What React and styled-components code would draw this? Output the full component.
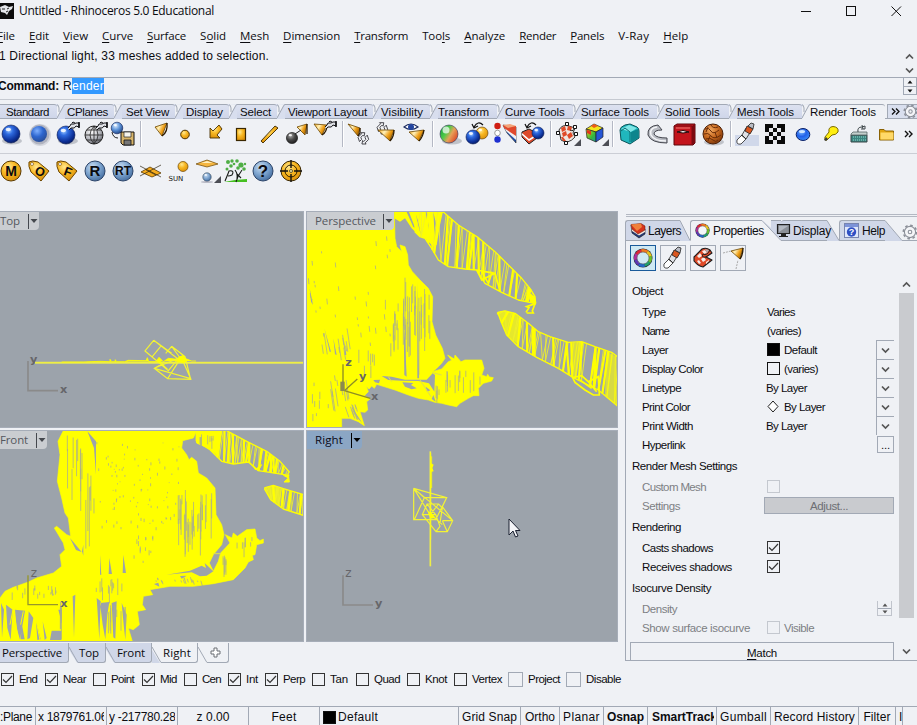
import React from "react";
import styled, { createGlobalStyle } from "styled-components";

const Global = createGlobalStyle`
  html, body { margin: 0; padding: 0; background: #eff1f5; overflow: hidden; }
  * { box-sizing: border-box; }
  svg { display: block; flex: none; }
`;

/* ---------- text ---------- */
const FONTS = {
  ui: '"Open Sans", "Noto Sans", sans-serif',
  sans: '"Liberation Sans", Arial, sans-serif',
};
const pen = document.createElement("canvas").getContext("2d");
const spacingFor = (text, font, width) => {
  pen.font = font;
  return (width - pen.measureText(text).width) / text.length;
};
const Label = styled.span`
  font-family: ${(p) => FONTS[p.$face]};
  font-size: ${(p) => p.$size}px;
  font-weight: ${(p) => (p.$bold ? 700 : 400)};
  letter-spacing: ${(p) => p.$ls.toFixed(3)}px;
  color: ${(p) => p.$color};
  white-space: pre;
  flex: none;
  line-height: 16px;
`;
const Under = styled.span`
  text-decoration: underline;
  text-underline-offset: 2px;
  text-decoration-thickness: 1px;
`;
/* A label whose tracking is adjusted so that it takes `w` pixels; `u` is the mnemonic letter's index. */
const T = ({ children, w, face = "sans", size = 12, bold, color = "#0c0c10", u }) => {
  const ls = spacingFor(children, `${bold ? "bold " : ""}${size}px ${FONTS[face]}`, w);
  return (
    <Label $face={face} $size={size} $bold={bold} $ls={ls} $color={color}>
      {u === undefined ? children : (
        <>{children.slice(0, u)}<Under>{children[u]}</Under>{children.slice(u + 1)}</>
      )}
    </Label>
  );
};

/* ---------- frame ---------- */
const Window = styled.div`
  width: 917px; height: 725px; background: #eff1f5; overflow: hidden;
  display: flex; flex-direction: column; position: relative;
`;
const TitleBar = styled.div`
  height: 22px; display: flex; align-items: center; flex: none;
`;
const TitleText = styled.div`margin-left: 5px; flex: 1; display: flex;`;
const Controls = styled.div`
  display: flex; gap: 34px; align-items: center; padding-right: 15px; height: 20px;
`;
const MenuBar = styled.div`
  height: 27px; display: flex; gap: 14px; align-items: center; flex: none; margin-left: -3px;
`;
const History = styled.div`
  height: 29px; flex: none; border-bottom: 1px solid #a2a9b5; display: flex;
  justify-content: space-between; padding-right: 3px;
`;
const HistoryText = styled.div`margin: -1px 0 0 -1px; display: flex; height: 16px;`;
const Chevrons = styled.div`
  display: flex; flex-direction: column; gap: 7px; padding-top: 4px;
`;
const Command = styled.div`
  height: 22px; flex: none; border-bottom: 1px solid #c6cad1; display: flex; align-items: flex-start;
`;
const CommandText = styled.div`display: flex; margin-left: -2px; gap: 4px; flex: 1;`;
const Entry = styled.div`display: flex;`;
const Selected = styled.span`background: #3399ff; height: 16px; display: flex; margin-left: 1px;`;
const Spinner = styled.div`
  width: 14px; height: 17px; border: 1px solid #a2a9b5; border-top: 0; margin-right: 0;
  display: grid; grid-template-rows: 1fr 1fr; align-items: center; justify-items: center;
`;
const SpinHalf = styled.div`
  width: 100%; height: 100%; display: grid; place-items: center;
  & + & { border-top: 1px solid #a2a9b5; }
`;
const SmallSpin = styled(Spinner)`height: 15px; width: 15px; border-color: #c0c4cc; margin-right: 2px;`;

/* ---------- toolbar tabs ---------- */
const TabStrip = styled.div`
  height: 19px; flex: none; display: flex; align-items: flex-end;
  border-bottom: 1px solid #a2a9b5;
`;
const TabBox = styled.div`
  width: ${(p) => p.$w}px; flex: none; display: flex;
  background: ${(p) => (p.$active ? "#eff1f5" : "linear-gradient(#dde2f0, #cfd6ea)")};
  margin-bottom: ${(p) => (p.$active ? "-1px" : 0)};
  height: ${(p) => (p.$active ? 15 : 14)}px;
`;
const TabFace = styled.div`
  flex: 1; border-top: 1px solid #a2a9b5; display: flex; align-items: center; min-width: 0;
  padding-left: ${(p) => p.$pad}px;
  border-radius: 0 3px 0 0;
`;
const Slant = ({ active }) => (
  <svg width="8" height="15" viewBox="0 0 8 15">
    <path d="M0 15 0 0 8 0 8 15Z" fill="#d3d9ea" />
    <path d="M-1 0H0Q2 0 0 3V13L7 .5H8" fill="#eff1f5" />
    <path d="M0 15 1 12 6 3Q7 .5 8 .5V15Z" fill={active ? "#eff1f5" : "#d8deee"} />
    <path d="M-1 .5Q2 .5 2 4V8M0 14 6 3Q7 .5 8 .5" fill="none" stroke="#a2a9b5" />
  </svg>
);
const StripEnd = styled.div`
  flex: 1; display: flex; align-items: center; height: 14px; border-left: 1px solid #a2a9b5;
  border-top: 1px solid #a2a9b5; padding-left: 3px; gap: 3px; margin-left: 2px; background: #d9dfee;
`;
const TOP_TABS = [
  ["Standard", 57, 43, 6, 1], ["CPlanes", 57, 41, 2], ["Set View", 61, 43, 4], ["Display", 54, 37, 3],
  ["Select", 48, 31, 3], ["Viewport Layout", 96, 79, 3], ["Visibility", 57, 42, 0], ["Transform", 67, 51, 0],
  ["Curve Tools", 76, 60, 0], ["Surface Tools", 84, 68, 0], ["Solid Tools", 72, 55, 0],
  ["Mesh Tools", 73, 57, 0], ["Render Tools", 83, 66, 0, 0, 1],
];

/* ---------- toolbars ---------- */
const ToolRow = styled.div`
  height: ${(p) => p.$h}px; flex: none; display: flex; padding-top: ${(p) => p.$top}px;
  border-bottom: ${(p) => (p.$line ? "1px solid #cbced5" : "0")};
  & > svg:first-child { margin-left: -3px; }
`;
const Divider = styled.div`
  width: 2px; height: 26px; margin: 1px 1px 0 3px; flex: none;
  background: linear-gradient(90deg, #b4b8c4 50%, #fff 50%);
`;
const More = styled.div`width: 16px; padding-top: 5px; flex: none;`;

const Slot = ({ children }) => <svg width="28" height="28" viewBox="0 0 28 28">{children}</svg>;
const Ball = ({ x = 14, y = 14, r = 9, fill = "blue", edge = "#0b1d55" }) => (
  <>
    <circle cx={x} cy={y} r={r} fill={`url(#${fill})`} stroke={edge} strokeWidth=".6" />
    <ellipse cx={x - r * 0.3} cy={y - r * 0.5} rx={r * 0.3} ry={r * 0.2} fill="#fff" opacity=".85" />
  </>
);
const Shade = ({ x = 15, y = 21, r = 10 }) => <ellipse cx={x} cy={y} rx={r} ry="3.5" fill="#5d6270" opacity=".32" />;
const Pot = ({ x = 0, y = 0 }) => (
  <g transform={`translate(${x} ${y})`} fill="none" stroke="#16161a" strokeWidth="1">
    <path d="M1 7 3 5Q3 2 7 3L9 2H12V6L9 5Q8 8 4 7L2 9M5 2 6 1 8 2" fill="#dfe1e6" />
    <path d="M12 1V7" strokeWidth="1.6" />
  </g>
);
const Cone = ({ p, tip }) => (
  <>
    <path d={p} fill="url(#cone)" stroke="#6b4600" strokeWidth=".8" strokeLinejoin="round" />
    <path d={tip} stroke="#2c1a00" strokeWidth="1.3" fill="none" />
  </>
);
const Links = ({ x, y }) => (
  <g transform={`translate(${x} ${y}) rotate(-45)`} fill="#f4f5f8" stroke="#3e3e44" strokeWidth=".9">
    <path d="M-5 0 -3-4 2-4 2-5.500 5-2.500 2-.5 2-2H-1L-2 0Z" />
    <path d="M5 1 3 5H-2V6.500L-5 3.500-2 1.500V3H1L2 1Z" />
  </g>
);
const Corner = () => <path d="M28 19V26H21Z" fill="#4c4e55" />;
const Wedge = ({ x = 0, y = 0 }) => (
  <g transform={`translate(${x} ${y})`} strokeWidth=".6">
    <path d="M0 1 13 3V19L4 9Z" fill="#1c4fb0" stroke="#222" />
    <path d="M1 2 13 3V16L3 7Z" fill="#f2f0f2" />
    <path d="M0 1 13 2V12L1 4Z" fill="#e0482c" />
    <path d="M0 1 7 0 13 2 5 4Z" fill="#f3a47a" />
  </g>
);
const Flip = ({ x = 0, y = 0 }) => (
  <path transform={`translate(${x} ${y})`} d="M0 5Q4-2 9 3M-2 2 0 6 4 4" fill="none" stroke="#111" strokeWidth="1.2" />
);
const Tube = () => (
  <g stroke="#222" strokeWidth=".8" strokeLinejoin="round">
    <path d="M4 20 9 15 13 19 8 24Q3 25 4 20Z" fill="#fff" />
    <path d="M9 15 13 8 18 11 13 19Z" fill="#dfe1e6" />
    <path d="M12 11 14 6 20 9 17 14Z" fill="#d9561f" />
    <path d="M15 6 18 3 21 4 20 9Z" fill="#b9bcc4" />
    <path d="M8 15 13 19" />
  </g>
);
const CheckBall = () => (
  <>
    <path d="M6 10Q9 4 16 6L22 8 20 13 22 17Q15 25 8 20Z" fill="#efe7e2" stroke="#222" strokeWidth=".9" />
    <path d="M8 8 12 6 13 10 9 12ZM15 6 19 7 18 11 14 10ZM9 13 13 11 14 15 10 17ZM14 15 18 12 20 16 16 19ZM8 17 10 17 13 21 10 21Z" fill="#df4a28" />
    <path d="M17 10Q21 12 21 8" fill="none" stroke="#222" />
  </>
);
const Roll = () => (
  <>
    <path d="M4 13 12 5Q16 3 20 6L22 9 16 13 22 16 13 23Q8 22 4 17Z" fill="#e04a28" stroke="#1c1c1c" strokeWidth="1.1" strokeLinejoin="round" />
    <path d="M7 12 10 9 12 12 9 14ZM12 7 15 6 17 9 14 10ZM11 15 14 13 16 16 13 18ZM7 17 9 16 11 19 9 20ZM16 18 19 16 19 17 16 20Z" fill="#f5ece8" />
    <path d="M16 13Q11 14 13 10 17 12 20 6" fill="none" stroke="#1c1c1c" />
    <path d="M15 5 19 6 17 9Z" fill="#aeb1b8" />
  </>
);

const ROW1 = [
  [
    <><Shade /><Ball /></>,
    <g key="b"><circle cx="15" cy="15" r="11" fill="#5b6172" opacity=".18" /><circle cx="14.5" cy="14.5" r="10" fill="#6d7386" opacity=".35" /><circle cx="14" cy="14" r="8" fill="url(#soft)" /></g>,
    <><Shade /><Ball x={13} y={15} /><Pot x={14} y={1} /></>,
    <g key="g"><circle cx="13" cy="15" r="9" fill="url(#grey)" stroke="#222" /><path d="M4 15H22M13 6V24M6 10H20M6 20H20M13 6Q5 15 13 24M13 6Q21 15 13 24" fill="none" stroke="#222" strokeWidth=".8" /><Pot x={14} y={1} /></g>,
    <g key="d"><Ball x={8} y={8} r={5.8} fill="sky" /><path d="M12 12H25V25H14L12 23Z" fill="#d8b56a" stroke="#111" /><path d="M15 12H22V17H15Z" fill="#f6f4ec" stroke="#222" strokeWidth=".7" /><path d="M15 20H22V25H15Z" fill="#777" stroke="#111" strokeWidth=".8" /><path d="M3 12Q4 18 9 18" fill="none" stroke="#222" /></g>,
  ],
  [
    <Cone p="M12 7 24 3 19 16Z" tip="M24 3Q25 12 19 16" />,
    <circle cx="14" cy="14.5" r="4.3" fill="url(#gold)" stroke="#4a3100" />,
    <path d="M11 8V18H21L18 15 23 9 20 5 14 11Z" fill="url(#gold)" stroke="#4a3100" strokeWidth=".9" />,
    <rect x="9.5" y="8.500" width="9" height="12" fill="url(#gold)" stroke="#3a2700" strokeWidth="1.2" />,
    <path d="M6 21 20 6 23 8 8 23Z" fill="url(#gold)" stroke="#3a2700" strokeWidth=".9" />,
    <><Cone p="M14 7 24 4 22 15Z" tip="M24 4V14" /><Ball x={9} y={18} r={5.6} fill="dark" edge="#111" /><path d="M12 14 18 10" stroke="#222" /></>,
    <><Cone p="M3 4 16 5 11 15Z" tip="M16 5Q16 12 11 15" /><Pot x={13} y={0} /></>,
  ],
  [
    <><Cone p="M3 4 15 8 13 16Z" tip="M15 8V13L13 16" /><Links x={18} y={18} /></>,
    <><Links x={9} y={8} /><Cone p="M5 10 21 10 17 21Z" tip="M21 10Q21 17 17 21" /></>,
    <g key="e"><path d="M3 7Q10 1 17 7Q10 12 3 7Z" fill="#fff" stroke="#1c2c60" strokeWidth="1.2" /><circle cx="10" cy="7" r="3" fill="#2345a0" /><Cone p="M8 12 23 10 18 21Z" tip="M23 10Q22 17 18 21" /></g>,
  ],
  [
    <><Shade x={17} /><circle cx="14" cy="14" r="9" fill="url(#rgb)" stroke="#335" strokeWidth=".6" /><circle cx="11" cy="10" r="3.500" fill="#fff" opacity=".7" /></>,
    <><Ball x={19} y={13} r={6} fill="gold" edge="#553600" /><Ball x={10} y={17} r={7} /><Flip x={11} y={2} /></>,
    <><Wedge x={12} y={4} /><circle cx="6.500" cy="6" r="3.200" fill="#cf1d12" /><circle cx="6.500" cy="13" r="2.800" fill="#fff" stroke="#777" strokeWidth=".7" /><circle cx="6.500" cy="19.500" r="3.200" fill="#1d2fd0" /></>,
    <><path d="M3 12 10 9 18 13V18L10 24 3 17Z" fill="#dd4a2c" stroke="#222" /><path d="M3 13 10 19 18 14V16L10 21 3 15Z" fill="#fff" /><Ball x={19} y={13} r={6} /><Flip x={8} y={2} /></>,
  ],
  [
    <><CheckBall /><g fill="#fff" stroke="#111"><path d="M12.500 2.500h3v3h-3zM3.500 11.500h3v3h-3zM21.500 12.500h3v3h-3zM20.500 5.500h3v3h-3zM11.500 21.500h3v3h-3z" /></g><Corner /></>,
    <><path d="M5 9 13 4 22 8 15 12Z" fill="#f2e61c" stroke="#222" strokeWidth=".7" /><path d="M5 9 15 12V22L6 18Z" fill="url(#cubeL)" stroke="#222" strokeWidth=".7" /><path d="M15 12 22 8V17L15 22Z" fill="#2656d6" stroke="#222" strokeWidth=".7" /><path d="M10 6 13 4 17 6 13 8Z" fill="#ee5a1a" /><path d="M6 10 10 11 10 15 6 13Z" fill="#e4361a" /><Corner /></>,
  ],
  [
    <><path d="M5 10Q5 7 10 5L15 4 22 7Q24 8 24 11V18L15 24 6 20Z" fill="#20b7bd" stroke="#0a5258" /><path d="M6 9 14 5 22 8 16 12Z" fill="#7fe6e6" /><path d="M16 12 23 9V18L16 23Z" fill="#0d858d" /><path d="M6 11 10 8 15 12V22" stroke="#0a6e74" fill="none" /></>,
    <><path d="M15 5Q4 6 5 15 8 23 24 23V18Q13 18 11 14 11 10 19 10Z" fill="#b9bcc3" stroke="#44464e" /><path d="M14 7Q6 8 8 15 11 21 23 21" fill="none" stroke="#f4f5f8" strokeWidth="1.600" /></>,
    <><path d="M3 6 6 4H24V23L22 25H3Z" fill="#c3141c" stroke="#5c060a" /><path d="M3 6H21V25" fill="none" stroke="#7b0a10" /><path d="M21 6 24 4V23L21 25Z" fill="#7b0a10" /><path d="M6 12Q12 9 18 12Q12 14 6 12Z" fill="#fff" stroke="#220406" /><path d="M5 8H19" stroke="#ef7a72" /></>,
    <><Shade x={15} y={22} /><circle cx="14" cy="14" r="10" fill="url(#bark)" stroke="#4a1f06" /><path d="M6 9Q10 7 12 11T20 10M5 14Q9 12 12 16T22 15M7 19Q11 17 14 20T19 20M12 5Q14 9 19 7M9 7 7 12M16 12 18 18M11 16 9 21" fill="none" stroke="#6b2d08" strokeWidth="1" /></>,
  ],
  [
    <><rect x="2" y="15" width="24" height="11" fill="#d0d8ea" /><Tube /></>,
    <><rect x="4" y="4" width="20" height="20" fill="#0a0a0a" /><path d="M8 8h4v4h-4zM16 8h4v4h-4zM12 12h4v4h-4zM4 12h4v4h-4zM20 12h4v4h-4zM8 16h4v4h-4zM16 16h4v4h-4zM12 4h4v4h-4zM12 20h4v4h-4z" fill="#e8e9ee" /></>,
    <><ellipse cx="14" cy="14.500" rx="6.800" ry="6" fill="url(#sky2)" stroke="#0a2068" /><ellipse cx="13" cy="11.500" rx="3" ry="1.500" fill="#cfe6ff" /></>,
    <><path d="M12 12Q11 7 16 6.500 22 7 21 12 19 15 15 15L10 20Q7 21 8 17Z" fill="#ffee10" stroke="#7b6a00" /><path d="M9 17 11 19 9 21 7 20Z" fill="#3c3c3c" /></>,
    <><path d="M6 15H22V22H6Z" fill="#3b8580" stroke="#3a4648" /><path d="M6 14 8 12H22V15H6Z" fill="#c4cfcd" stroke="#566" strokeWidth=".8" /><path d="M8 17H21M8 20H21" stroke="#95d8cd" strokeDasharray="1 1" /><path d="M13 12Q12 7 17 7L20 6V9L16 9M17 5 18 9" fill="none" stroke="#3e474a" /></>,
    <><path d="M6.500 9.500H11L12.500 11H20.500V20H6.500Z" fill="#e0a410" stroke="#8a6204" /><path d="M7.500 12.500H20.500V19.500H7.500Z" fill="#ffd968" /></>,
  ],
];

const Coin = ({ fill, edge, text, size = 14 }) => (
  <>
    <circle cx="14" cy="14" r="10" fill={`url(#${fill})`} stroke={edge} />
    <text x="14" y={14 + size * 0.36} textAnchor="middle" fontFamily="Liberation Sans" fontWeight="700" fontSize={size} fill="#0a0a0e">{text}</text>
  </>
);
const Tag = ({ text }) => (
  <>
    <path d="M4 5Q7 3 13 5L24 14 16 24 6 15Q3 9 4 5Z" fill="url(#gold)" stroke="#6b4500" />
    <circle cx="7" cy="7" r="1.500" fill="#fff" stroke="#6b4500" strokeWidth=".6" />
    <text x="15" y="19" transform="rotate(20 15 15)" textAnchor="middle" fontFamily="Liberation Sans" fontWeight="700" fontSize="12.500" fill="#0a0a0e">{text}</text>
  </>
);
const ROW2 = [
  <Coin fill="gold" edge="#5a3a00" text="M" />,
  <Tag text="O" />,
  <Tag text="F" />,
  <Coin fill="steel" edge="#2c4468" text="R" size={15} />,
  <Coin fill="steel" edge="#2c4468" text="RT" size={12} />,
  <><path d="M4 15 13 10 24 16 15 20Z" fill="#f5ab1c" stroke="#5a3a00" strokeWidth=".8" /><path d="M3 9 24 20M3 19 24 8M9 13 19 18" stroke="#2c2410" strokeWidth=".7" /></>,
  <><circle cx="18" cy="9.500" r="5" fill="url(#gold)" stroke="#6b4500" strokeWidth=".7" /><text x="3.500" y="24" fontFamily="DejaVu Sans" fontSize="7" fill="#111">SUN</text></>,
  <><path d="M3 7 14 3 25 7 14 10Z" fill="#f5b641" stroke="#6b4500" strokeWidth=".7" /><path d="M8 6 14 4 20 6Z" fill="#fff0c0" /><Ball x={14} y={20} r={4.200} fill="steel" edge="#345" /><ellipse cx="14" cy="25" rx="6" ry="1" fill="#889" opacity=".5" /><Corner /></>,
  <><path d="M3 25H26V22L14 23Z" fill="#45c021" /><g fill="#4fae45"><circle cx="7" cy="5" r="2" /><circle cx="11" cy="4" r="1.700" /><circle cx="16" cy="4" r="1.800" /><circle cx="20" cy="8" r="2.600" /><circle cx="17" cy="11" r="1.800" /><circle cx="10" cy="9" r="1.800" /><circle cx="23" cy="12" r="1.800" /><circle cx="6" cy="12" r="1.500" /><circle cx="13" cy="7" r="1.300" /><circle cx="24" cy="7" r="1.200" /></g><path d="M4 24Q7 17 8 14 14 13 11 18 9 19 7 19M14 13Q17 17 16 22M21 13Q17 18 15 25M16 17 20 21" fill="none" stroke="#161a16" strokeWidth="1.100" /></>,
  <Coin fill="steel" edge="#2c4468" text="?" size={17} />,
  <><circle cx="14" cy="14" r="10" fill="url(#gold)" stroke="#3a2700" /><circle cx="14" cy="14" r="6" fill="none" stroke="#2a1c00" /><path d="M3 14H11M17 14H25M14 3V11M14 17V25" stroke="#111" strokeWidth="1.400" /><circle cx="14" cy="14" r="1.500" fill="#fff3a0" stroke="#222" strokeWidth=".7" /></>,
];

const grad = (id, stops, at = {}) => (
  <radialGradient id={id} key={id} cx=".38" cy=".3" r=".75" {...at}>
    {stops.map(([o, c]) => <stop key={o} offset={o} stopColor={c} />)}
  </radialGradient>
);
const HiddenDefs = styled.svg`position: absolute; width: 0; height: 0;`;
const Paints = () => (
  <HiddenDefs>
    <defs>
      {grad("blue", [[0, "#9cc8ff"], [0.3, "#2f6be0"], [0.75, "#0c2f96"], [1, "#071c60"]])}
      {grad("soft", [[0, "#7fb0ff"], [0.5, "#2d66cf"], [1, "#2a4d94"]])}
      {grad("sky", [[0, "#dcedff"], [0.5, "#5d93d8"], [1, "#1c4080"]])}
      {grad("sky2", [[0, "#7ab8ff"], [0.5, "#2060e8"], [1, "#3c90f8"]])}
      {grad("steel", [[0, "#c9ddf2"], [0.5, "#7fa6d0"], [1, "#426b9e"]])}
      {grad("grey", [[0, "#ffffff"], [0.6, "#b5b7bd"], [1, "#606269"]])}
      {grad("dark", [[0, "#a8a8a8"], [0.5, "#474747"], [1, "#1c1c1c"]])}
      {grad("gold", [[0, "#ffe890"], [0.45, "#f8b823"], [1, "#d98e08"]])}
      {grad("bark", [[0, "#f0a860"], [0.5, "#c96a20"], [1, "#7a3408"]])}
      <linearGradient id="cone" x1="0" y1="0" x2="1" y2=".5"><stop offset="0" stopColor="#ffb020" /><stop offset=".4" stopColor="#fff0b8" /><stop offset=".7" stopColor="#f0a018" /><stop offset="1" stopColor="#a86400" /></linearGradient>
      <linearGradient id="rgb" x1="0" y1=".2" x2="1" y2=".8"><stop offset="0" stopColor="#18a040" /><stop offset=".35" stopColor="#4ecb48" /><stop offset=".6" stopColor="#e8a058" /><stop offset="1" stopColor="#d83a20" /></linearGradient>
      <linearGradient id="cubeL" x1="0" y1="0" x2="1" y2="1"><stop offset="0" stopColor="#f2d21c" /><stop offset=".6" stopColor="#38b83a" /><stop offset="1" stopColor="#1a9aa0" /></linearGradient>
    </defs>
  </HiddenDefs>
);

/* ---------- viewports ---------- */
const Y = "#ffff00";
const G = "#9ca3ab";
const random = (seed) => () => {
  seed = (seed * 16807) % 2147483647;
  return seed / 2147483647;
};
const along = (pts, x) => {
  for (let i = 1; i < pts.length; i++) {
    const [x0, y0] = pts[i - 1];
    const [x1, y1] = pts[i];
    if (x <= x1) return y0 + ((y1 - y0) * (x - x0)) / (x1 - x0 || 1);
  }
  return pts[pts.length - 1][1];
};
const line = (pts) => "M" + pts.map((p) => p.join(" ")).join("L");
/* Triangulated strip between an upper and a lower outline. */
const Strip = ({ top, bot, step = 9, seed = 7, lean = 6 }) => {
  const r = random(seed);
  const x0 = Math.max(top[0][0], bot[0][0]);
  const x1 = Math.min(top[top.length - 1][0], bot[bot.length - 1][0]);
  const inside = (x) => Math.min(x1, Math.max(x0, x));
  let thin = "";
  let thick = "";
  for (let x = x0; x < x1; x += step * (0.5 + r() * 1.2)) {
    const a = inside(x + (r() - 0.3) * lean * 2);
    const b = inside(x + (r() - 0.7) * lean);
    const seg = `M${a} ${along(top, a)}L${b} ${along(bot, b)}`;
    if (r() > 0.5) thick += seg; else thin += seg;
    const c = inside(b + step * 1.3);
    thin += `M${c} ${along(top, c)}L${b} ${along(bot, b)}`;
  }
  return (
    <g fill="none" stroke={Y} strokeLinejoin="round">
      <path d={line(top) + line(bot)} strokeWidth="4" />
      <path d={thin} strokeWidth="2.600" stroke="#f0f028" />
      <path d={thick} strokeWidth="6.500" />
    </g>
  );
};
/* Thin gaps between mesh faces. */
const Gaps = ({ areas, seed = 3 }) => {
  const r = random(seed);
  let d = "";
  areas.forEach(([x, y, w, h, n, len, lean = 0]) => {
    for (let i = 0; i < n; i++) {
      const px = x + r() * w;
      const py = y + r() * h;
      const l = len * (0.3 + r());
      d += `M${px.toFixed(1)} ${py.toFixed(1)}l${lean * l} ${l}`;
    }
  });
  return <path d={d} fill="none" stroke="#a9ad90" strokeWidth="2.300" />;
};
const ViewGrid = styled.div`
  width: 618px; height: 431px; flex: none; display: grid;
  grid-template-columns: 304px 312px; grid-template-rows: 217px 212px; gap: 2px;
`;
const View = styled.div`
  background: ${G}; border: 1px solid #a6adb8; border-left-width: ${(p) => (p.$edge ? 0 : 1)}px;
  position: relative; overflow: hidden;
`;
const ViewTag = styled.div`
  position: absolute; left: 0; top: 0; height: 18px; width: ${(p) => p.$w}px;
  display: flex; align-items: center; padding-left: ${(p) => p.$pad}px;
  background: ${(p) => (p.$active ? "#8ba6c4" : "#cacdd1")}; border-radius: 0 0 4px 0;
`;
const TagRule = styled.i`
  width: 1px; height: 15px; background: ${(p) => p.$c}; margin-left: auto;
`;
const Arrow = ({ c }) => <svg width="10" height="10" viewBox="0 0 10 10"><path d="M1.500 3H8.500L5 7Z" fill={c} /></svg>;
const Caption = ({ name, w, tw, pad, active }) => (
  <ViewTag $w={w} $pad={pad} $active={active}>
    <T w={tw} face="ui" size={11.5} color={active ? "#0a0a18" : "#55585e"}>{name}</T>
    <TagRule $c={active ? "#000" : "#45484e"} />
    <Arrow c={active ? "#000" : "#45484e"} />
  </ViewTag>
);
const AxisText = ({ x, y, children, light }) => (
  <text x={x} y={y} fontFamily="DejaVu Sans" fontWeight={light ? 400 : 700} fontSize={light ? 36 : 34} fill="#66666a">{children}</text>
);
const Cursor = styled.svg`position: absolute; left: 201px; top: 87px;`;

const persTop = [[330, 12], [415, 21], [460, 60], [520, 98], [570, 140], [610, 180], [650, 220], [675, 250], [690, 275], [692, 296]];
const persTopLow = [[330, 80], [345, 95], [360, 100], [380, 130], [400, 165], [430, 185], [480, 192], [515, 195], [540, 235], [590, 262], [640, 285], [692, 296]];
const persBot = [[578, 322], [600, 318], [630, 325], [670, 355], [700, 380], [735, 395], [790, 412], [830, 410], [870, 425], [920, 442], [940, 457]];
const persBotLow = [[578, 322], [590, 355], [605, 390], [640, 425], [695, 457], [760, 490], [805, 518], [880, 555], [940, 605]];
const frontTop = [[590, 5], [680, 8], [740, 40], [800, 70], [840, 100], [868, 132]];
const frontTopLow = [[590, 40], [630, 65], [665, 100], [700, 108], [745, 102], [775, 128], [868, 142]];
const frontBot = [[793, 180], [820, 172], [850, 182], [910, 200]];
const frontBotLow = [[793, 182], [812, 215], [850, 243], [910, 262]];

/* Drawing units in the viewports are thirds of a pixel. */
const TopView = () => (
  <View $edge>
    <svg width="303" height="215" viewBox="0 21 909 645">
      <path d="M84 468V557H174" fill="none" stroke="#8a8a8a" strokeWidth="5" />
      <AxisText x="90" y="474">y</AxisText><AxisText x="180" y="564">x</AxisText>
      <path d="M105 473.500H909" stroke="#e6e65c" strokeWidth="6" />
      <path d="M105 473H909" stroke="#f4f430" strokeWidth="2" />
      <path d="M185 471H250L300 469 330 470V463L335 470H345L346 464L349 470H374L385 466 438 467 442 458 446 470H468L477 457 490 470 505 460 530 463 545 455 560 462 575 468H588" fill={Y} stroke={Y} strokeWidth="2.500" />
      <g fill="none" stroke="#f4f430" strokeWidth="3.500">
        <path d="M461 406 435 438 505 497 530 467M461 406 545 470M461 406 515 445M484 422 455 457M435 438 478 474M515 424 497 445M515 424 555 455 572 523 503 521 463 490 545 455 503 521M463 490 572 521 545 460M515 424 545 465M478 470 503 493M490 475 463 490" />
      </g>
      <path d="M530 470 536 455 550 450 562 468 550 475ZM470 470 478 458 485 476Z" fill={Y} />
    </svg>
    <Caption name="Top" w={39} tw={20} pad={0} />
  </View>
);
const PerspectiveView = () => (
  <View>
    <svg width="310" height="215" viewBox="6 21 930 645">
      <path d="M6 21H268L270 100 275 125 290 140 285 120 300 125 308 150 310 180 322 200 345 225 370 250 383 275 381 350 392 390 412 430 420 460 410 475 395 490 383 500 410 492 430 470 440 466 428 450 448 462 450 450 468 470 480 465 530 465 537 490 530 510 545 515 548 508 553 516 565 518 560 528 535 535 520 550 522 572 505 572 490 580 465 595 455 605 430 600 410 595 390 592 370 585 340 580 310 570 270 555 215 538 208 550 200 543 192 552 184 543 190 560 178 572 195 582 185 590 188 615 180 622 165 620 178 662 160 650 135 640 110 640 110 667H6Z" fill={Y} stroke={Y} strokeWidth="2" />
      <path d="M230 513 260 515 300 524H365L383 505 390 510 388 560 372 535 340 528 290 527 250 525ZM292 532 325 534 318 540 335 550 320 553 300 545ZM362 545 376 556 366 560ZM205 525 225 524 222 535 210 532ZM385 570 392 590 380 582Z" fill={G} />
      <path d="M382 503 410 510M345 525 378 575M250 515 260 530" stroke="#dede50" strokeWidth="3" />
      <Gaps seed={41} areas={[[10, 90, 250, 330, 32, 14, 0.1], [240, 280, 40, 150, 10, 60], [295, 215, 38, 180, 14, 80], [336, 240, 42, 110, 8, 80], [50, 370, 80, 60, 10, 50, 0.15], [20, 530, 50, 100, 8, 22], [75, 510, 50, 50, 10, 50, 0.15], [120, 595, 35, 20, 8, 35, 0.35], [140, 430, 70, 60, 7, 40], [415, 490, 110, 40, 14, 45], [388, 530, 15, 30, 4, 40]]} />
      <Gaps seed={99} areas={[[300, 215, 30, 140, 9, 140], [338, 260, 30, 40, 4, 180], [260, 300, 35, 120, 5, 80]]} />
      <path d="M58 370 78 440 74 440ZM85 400 95 450 90 448ZM118 408 124 450H119ZM14 250 24 300 18 290ZM337 232 342 520H337ZM295 300 305 515 298 510ZM140 605 172 655 158 640Z" fill={G} />
      <path d="M268 15H415L405 60 395 120 385 125 360 100 345 95 320 70 300 40 285 50 268 40Z" fill={Y} />
      <path d="M305 21 325 66 330 68 312 21ZM330 21 348 92 340 50ZM362 21 372 80 366 21ZM385 21 390 110 394 60Z" fill={G} />
      <Strip top={persTop} bot={persTopLow} step={12} seed={91} lean={9} />
      <path d="M515 195 540 200 570 205 585 258M515 195 530 225 570 205M530 200 550 235 562 200M663 322 672 308 665 305 690 296 682 318 685 324 665 324" fill="none" stroke={Y} strokeWidth="5" />
      <path d="M670 262 690 275 692 300 675 290Z" fill={Y} />
      <path d="M578 322 600 318 630 325 650 345 640 420 605 390 590 355Z" fill={Y} opacity=".75" />
      <Strip top={persBot} bot={persBotLow} step={12} seed={37} lean={14} />
      <path d="M800 414 830 410 815 516 805 518ZM905 440 935 455 935 600 900 570Z" fill={Y} opacity=".6" />
      <path d="M803 518 830 512 850 530 880 515 883 570 865 570 840 555 810 532ZM825 525 860 550M850 530 875 560" fill="none" stroke={Y} strokeWidth="5" />
      <path d="M114 478V557M118 557 157 522M118 557 196 580" fill="none" stroke="#8d8d25" strokeWidth="4" />
      <rect x="106" y="530" width="13" height="28" fill="#8a8a50" />
      <AxisText x="121" y="484">z</AxisText><AxisText x="162" y="524">y</AxisText><AxisText x="198" y="584">x</AxisText>
    </svg>
    <Caption name="Perspective" w={87} tw={61} pad={8} />
  </View>
);
const FrontView = () => (
  <View $edge>
    <svg width="303" height="210" viewBox="0 9 909 630">
      <path d="M190 8H590L580 30 548 38 545 60 560 80 567 95 575 88 590 100 595 135 620 150 645 180 648 260 665 290 672 320 665 350 640 380 628 405 640 430 655 400 662 375 690 345 676 320 696 330 700 315 712 325 740 305 765 303 770 330 780 338 790 333 790 345 770 350 765 380 757 382 760 395 745 402 735 420 700 455 640 467 580 475 510 475 450 485 458 500 430 505 427 530 437 545 412 550 418 590 400 605 385 600 397 640H0V510L15 490 40 478 85 462 110 450 160 435 185 415 180 380 195 365 190 345 163 300 170 295 200 320 212 325 205 270 195 255 185 210 172 160 180 80 174 40Z" fill={Y} stroke={Y} strokeWidth="2" />
      <path d="M500 440 570 428 605 413 618 420 614 405 640 430 620 443 600 445 575 433ZM462 468 475 464 478 476ZM540 444 560 443 545 452Z" fill={G} />
      <path d="M18 530 38 545 32 635 22 600ZM45 545 75 548 60 635 50 600ZM86 550 100 570 90 630 82 634ZM108 578 112 636 122 634ZM128 580 140 630 134 636ZM155 608H184V636H150ZM3 525 12 545 6 630ZM66 590 74 634 62 634ZM218 505 222 630 226 500ZM290 510 298 634 302 520ZM300 525 328 522 322 560 316 634 308 590ZM335 525 350 520 346 632 340 628ZM365 525 372 600 376 635 380 560ZM300 380 304 440H300ZM328 390 336 438H326ZM370 380 378 435H368ZM210 330 245 372 228 366ZM175 545 184 580 186 545ZM250 350V383L246 370ZM262 10 288 40V140L282 60Z" fill={G} />
      <path d="M150 605 186 602M30 590 40 540 55 636M70 550 62 590M100 636 108 575 120 636" stroke={Y} strokeWidth="3" fill="none" />
      <Gaps seed={61} areas={[[202, 20, 45, 110, 10, 120], [255, 130, 30, 90, 6, 140], [290, 40, 250, 130, 45, 7], [300, 180, 240, 120, 45, 8], [400, 320, 60, 80, 14, 12], [530, 180, 60, 120, 16, 80], [550, 250, 60, 40, 10, 110], [600, 160, 38, 90, 9, 110], [20, 470, 150, 30, 18, 18], [280, 450, 100, 30, 12, 40], [320, 525, 60, 30, 10, 60], [180, 500, 10, 40, 5, 80], [460, 447, 150, 12, 16, 14, 0.3], [660, 380, 25, 20, 6, 45], [700, 325, 60, 25, 7, 35]]} />
      <Strip top={frontTop} bot={frontTopLow} step={9} seed={17} lean={7} />
      <path d="M590 9H665L655 85 625 60 590 45ZM850 142 865 150 852 162 868 162 865 140M750 104 775 128 785 110 765 125" fill={Y} stroke={Y} strokeWidth="3" />
      <Gaps seed={35} areas={[[600, 15, 55, 20, 9, 30]]} />
      <path d="M793 180 820 172 845 182 840 235 812 215Z" fill={Y} opacity=".75" />
      <Strip top={frontBot} bot={frontBotLow} step={8} seed={53} />
      <path d="M84 442V530H174" fill="none" stroke="#96962c" strokeWidth="4" />
      <path d="M640 377H662" stroke="#dede50" strokeWidth="3" />
      <AxisText light x="92" y="446">z</AxisText><AxisText x="181" y="538">x</AxisText>
    </svg>
    <Caption name="Front" w={47} tw={28} pad={0} />
  </View>
);
const RightView = () => (
  <View>
    <svg width="310" height="210" viewBox="6 9 930 630">
      <path d="M114 442V531H204" fill="none" stroke="#8a8a8a" strokeWidth="5" />
      <AxisText light x="121" y="446">z</AxisText><AxisText x="210" y="538">y</AxisText>
      <path d="M376 70V415" stroke="#eded48" strokeWidth="5" />
      <path d="M377 75V335M380 85V180" stroke={Y} strokeWidth="2.500" />
      <path d="M377 105 386 110 382 120 386 130 377 132Z" fill={Y} />
      <path d="M326 181 425 209 412 236 443 278 427 311H393L352 260 366 228H401L412 240M326 181V275H392L425 209H358L326 181 443 278M326 181 375 260 401 228M358 209 328 275M352 260H392L366 228M392 260 405 295 393 311M412 278H443M412 278 427 311M405 285 412 240M376 258 412 290" fill="none" stroke="#f3f334" strokeWidth="3.500" />
      <path d="M368 250 380 255 392 270 376 272Z" fill={Y} />
    </svg>
    <Caption name="Right" w={55} tw={28} pad={8} active />
    <Cursor width="14" height="20" viewBox="0 0 14 20"><path d="M1 1V17L5 13 7.500 19 10 18 7.500 12.500H12Z" fill="#f4f5f8" stroke="#1a2030" strokeWidth="1" /></Cursor>
  </View>
);

const ViewTabs = styled.div`
  height: 22px; flex: none; display: flex; align-items: flex-start; padding-top: 1px;
`;
const ViewTab = styled.div`
  width: ${(p) => p.$w}px; height: 20px; flex: none; display: flex; align-items: center;
  padding-left: ${(p) => p.$pad}px; background: ${(p) => (p.$plain ? "#eff1f5" : "#d0d7e8")};
  border: solid #a2a9b5; border-width: 0 1px 1px 0; border-radius: 0 0 3px 0;
`;
const Notch = ({ cut, body, line: stroke = "#a2a9b5" }) => (
  <svg width="9" height="20" viewBox="0 0 9 20">
    <path d="M0 0H9V20H8L0 7Z" fill={body} /><path d="M0 7 8 20H0Z" fill={cut} />
    <path d="M0 4 8 18L9 19.500" fill="none" stroke={stroke} />
  </svg>
);

/* ---------- properties panel ---------- */
const Middle = styled.div`display: flex; flex: none; height: 472px; padding-top: 20px;`;
const LeftSide = styled.div`width: 618px; flex: none;`;
const Side = styled.div`
  width: 292px; flex: 1; margin-left: 7px; padding-top: 3px; display: flex; flex-direction: column;
`;
const DoubleRule = styled.div`height: 3px; flex: none; border: solid #b3b8c2; border-width: 1px 0; margin-left: 1px;`;
const SideTabs = styled.div`
  height: 24px; flex: none; padding-top: 3px; display: flex;
`;
const SideTab = styled.div`
  width: ${(p) => p.$w}px; height: 21px; flex: none; display: flex; align-items: center;
  padding-left: ${(p) => p.$pad}px; background: ${(p) => (p.$active ? "#eff1f5" : "#d0d7e8")};
  border: 1px solid #a2a9b5; border-right: 0; border-radius: 3px 0 0 0;
  border-bottom-color: ${(p) => (p.$active ? "#eff1f5" : "#a2a9b5")};
  border-left-width: ${(p) => (p.$joined ? 0 : 1)}px;
`;
const SideTabContent = styled.div`
  display: flex; align-items: center; gap: ${(p) => p.$gap}px; flex: none;
  position: relative; z-index: 1; margin-left: ${(p) => p.$pull || 0}px;
`;
const Slope = ({ body, behind, w }) => (
  <svg width={w} height="21" viewBox={`0 0 ${w} 21`}>
    <rect width={w} height="21" fill={behind} />
    <path d={`M0 .5 ${w} 20.500V21H0Z`} fill={body} />
    <path d={`M0 .5 ${w} 20.500`} stroke="#a2a9b5" />
    {behind !== "#eff1f5" && <path d={`M8 .5H${w}`} stroke="#a2a9b5" />}
    {behind !== "#eff1f5" && <path d="M0 0H9V8Z" fill="#eff1f5" />}
  </svg>
);
const GearBox = styled.div`flex: 1; padding: 4px 0 0 0; border-bottom: 1px solid #a2a9b5;`;
const Panel = styled.div`
  flex: none; height: 420px; border: solid #a2a9b5; border-width: 0 0 1px 1px; display: flex;
`;
const PanelBody = styled.div`width: 268px; flex: none; padding: 4px 0 0 4px; display: flex; flex-direction: column;`;
const IconButtons = styled.div`display: flex; gap: 4px; height: 34px; flex: none;`;
const IconButton = styled.div`
  width: 26px; height: 26px; display: grid; place-items: center;
  border: 1px solid ${(p) => (p.$on ? "#1a5a9a" : "#a2a9b5")};
  background: ${(p) => (p.$on ? "#cfe9f3" : "#eff1f5")};
`;
const Heading = styled.div`height: 23px; flex: none; display: flex; align-items: center; padding-left: 2px;`;
const Row = styled.div`
  height: 19px; flex: none; display: grid; grid-template-columns: 124px 1fr auto; align-items: center; padding-left: 12px;
`;
const Value = styled.div`display: flex; align-items: center; gap: 4px; padding-left: ${(p) => p.$pad || 0}px;`;
const Swatch = styled.i`width: 13px; height: 13px; border: 1px solid #111; background: ${(p) => p.$c}; margin-left: 1px;`;
const Drop = styled.div`
  width: 18px; height: 19px; border: solid #a2a9b5; border-width: 1px 0 0 1px; display: grid; place-items: center;
`;
const Dots = styled.div`
  width: 17px; height: 17px; border: 1px solid #a2a9b5; display: flex; justify-content: center;
`;
const Box = styled.i`
  width: ${(p) => p.$s || 13}px; height: ${(p) => p.$s || 13}px; border: 1px solid ${(p) => p.$c || "#333"};
  display: grid; place-items: center; flex: none;
`;
const Adjust = styled.div`
  width: 130px; height: 17px; background: #c9cbcf; border: 1px solid #a2a9b5; display: grid; place-items: center;
  margin-left: -2px;
`;
const Match = styled.div`
  margin-top: 5px; height: 18px; width: 264px; border: 1px solid #a2a9b5; border-bottom: 0; display: flex;
  justify-content: center; align-items: center; padding-top: 3px;
`;
const ScrollBar = styled.div`
  width: 15px; margin-left: 5px; display: flex; flex-direction: column; align-items: center; padding: 40px 0 5px;
`;
const Thumb = styled.div`width: 15px; height: 325px; background: #c9cbcf; margin-top: 5px; margin-bottom: auto;`;
const Tick = () => <svg width="11" height="11" viewBox="0 0 11 11"><path d="M1 5.500 4 8.500 10 2" fill="none" stroke="#333" strokeWidth="1.200" /></svg>;
const Chev = ({ up, w = 9, c = "#555" }) => (
  <svg width={w} height="7" viewBox="0 0 9 7"><path d={up ? "M1 5.500 4.500 2 8 5.500" : "M1 1.500 4.500 5 8 1.500"} fill="none" stroke={c} strokeWidth="1.700" /></svg>
);
const Tri = ({ up, c = "#111" }) => <svg width="6" height="4" viewBox="0 0 6 4"><path d={up ? "M.5 3.500 3 .5 5.500 3.500Z" : "M.5 .5 3 3.500 5.500 .5Z"} fill={c} /></svg>;
const Gear = ({ s = 15 }) => (
  <svg width={s} height={s} viewBox="0 0 16 16" fill="none" stroke="#8b8f98" strokeWidth="1.100">
    <circle cx="8" cy="8" r="5.600" fill="#f4f5f8" /><circle cx="8" cy="8" r="1.800" /><circle cx="8" cy="8" r="6.700" strokeDasharray="2.600 2.660" strokeWidth="1.600" />
  </svg>
);
const Wheel = ({ s, inner = "#f4f6fa" }) => {
  const cols = ["#e7c21c", "#6cc02c", "#1fa06c", "#2468c8", "#5c38b4", "#b02f9a", "#dd2838", "#f07820"];
  return (
    <svg width={s} height={s} viewBox="-10 -10 20 20">
      <circle r="9.500" fill="#2a2a35" />
      {cols.map((c, i) => {
        const a = (i * Math.PI) / 4 - 1;
        const b = a + Math.PI / 4 + 0.03;
        return <path key={c} d={`M0 0 ${9 * Math.cos(a)} ${9 * Math.sin(a)}A9 9 0 0 1 ${9 * Math.cos(b)} ${9 * Math.sin(b)}Z`} fill={c} />;
      })}
      <circle r="6" fill={inner} stroke="#555" strokeWidth=".6" />
    </svg>
  );
};
const LayersIcon = () => (
  <svg width="16" height="16" viewBox="0 0 16 16"><path d="M1 2 2 10 9 15 15 11V6L8 10Z" fill="#243a78" stroke="#111" strokeWidth=".6" /><path d="M1 2 2 8 9 12.500 15 9V6L8 9Z" fill="#f5e6da" /><path d="M1 1.500 11 .5 15 3V7L8 11 2 6Z" fill="#d5331c" stroke="#5a1208" strokeWidth=".5" /><path d="M1 1.500 11 .5 12 4 7 8Z" fill="#f0803c" /></svg>
);
const DisplayIcon = () => (
  <svg width="15" height="15" viewBox="0 0 15 15"><path d="M1.500 1.500H13.500V10.500H1.500Z" fill="#8b9098" stroke="#222" strokeWidth="1.200" /><path d="M5 11H10V13H12V14H3V13H5Z" fill="#222" /><path d="M3 3H12L3 9Z" fill="#b3b8c0" /></svg>
);
const HelpIcon = () => (
  <svg width="15" height="15" viewBox="0 0 15 15"><rect x=".5" y=".5" width="14" height="14" fill="#dfe7fb" stroke="#7784b0" /><rect x="1" y="1" width="13" height="3" fill="#7d93d8" /><circle cx="7.500" cy="9" r="4.700" fill="#2e4fc4" /><text x="7.500" y="12.200" textAnchor="middle" fontFamily="Liberation Sans" fontWeight="700" fontSize="9" fill="#fff">?</text></svg>
);
const grey = "#7d7f84";
const P = (p) => <T size={11.5} {...p} />;

/* ---------- bottom bars ---------- */
const Snaps = styled.div`height: 43px; flex: none; display: flex; align-items: center; padding-bottom: 11px;`;
const Snap = styled.div`display: flex; align-items: center; gap: 5px; width: ${(p) => p.$w}px; flex: none; padding-left: 1px;`;
const SNAPS = [
  ["End", 44, 18, 1], ["Near", 48, 23, 1], ["Point", 49, 23], ["Mid", 42, 17, 1], ["Cen", 44, 19], ["Int", 37, 12, 1],
  ["Perp", 47, 22, 1], ["Tan", 44, 18], ["Quad", 51, 26], ["Knot", 47, 22], ["Vertex", 54, 30], ["Project", 58, 32, 0, 1], ["Disable", 60, 35, 0, 1],
];
const Status = styled.div`height: 19px; flex: none; border-top: 1px solid #a2a9b5; display: flex;`;
const Cell = styled.div`
  width: ${(p) => p.$w}px; flex: none; overflow: hidden; border-right: 1px solid #a2a9b5; display: flex;
  align-items: center; justify-content: ${(p) => (p.$start ? "flex-start" : "center")};
  padding: 2px 2px 0 ${(p) => p.$pad ?? 2}px; gap: 2px;
`;
const Clip = styled.div`overflow: hidden; display: flex; justify-content: flex-start; width: 100%;`;

const MENU = [["File", 18, 0], ["Edit", 20, 0], ["View", 25, 0], ["Curve", 31, 0], ["Surface", 39, 0], ["Solid", 26, 1], ["Mesh", 29, 0], ["Dimension", 57, 0], ["Transform", 54, 0], ["Tools", 28, 3], ["Analyze", 41, 0], ["Render", 37, 0], ["Panels", 34, 0], ["V-Ray", 31], ["Help", 25, 0]];

export default function App() {
  return (
    <Window>
      <Global />
      <Paints />
      <TitleBar>
        <svg width="14" height="16" viewBox="0 0 14 16"><rect width="14" height="16" fill="#0c0c0c" /><path d="M0 4 5 2 9 4 13 3 12 6 9 8 7 12 5 10 1 9Z" fill="#e4e6ea" /><path d="M2 6 5 6M7 6 9 5M6 9 8 8" stroke="#222" /></svg>
        <TitleText><T w={195} face="ui">Untitled - Rhinoceros 5.0 Educational</T></TitleText>
        <Controls>
          <svg width="11" height="11" viewBox="0 0 11 11"><path d="M0 5.500H10" stroke="#111" /></svg>
          <svg width="11" height="11" viewBox="0 0 11 11"><rect x=".5" y=".5" width="9" height="9" fill="none" stroke="#111" /></svg>
          <svg width="11" height="11" viewBox="0 0 11 11"><path d="M.5 .5 10 10M10 .5 .5 10" stroke="#111" /></svg>
        </Controls>
      </TitleBar>
      <MenuBar>{MENU.map(([n, w, u]) => <T key={n} w={w} u={u} face="ui" size={11.5}>{n}</T>)}</MenuBar>
      <History>
        <HistoryText><T w={270}>1 Directional light, 33 meshes added to selection.</T></HistoryText>
        <Chevrons><Chev up /><Chev /></Chevrons>
      </History>
      <Command>
        <CommandText>
          <T w={61} bold>Command:</T>
          <Entry><T w={8}>R</T><Selected><T w={32} color="#fff">ender</T></Selected></Entry>
        </CommandText>
        <Spinner><SpinHalf><Tri up /></SpinHalf><SpinHalf><Tri /></SpinHalf></Spinner>
      </Command>
      <TabStrip>
        {TOP_TABS.map(([n, w, tw, pad, first, active]) => (
          <TabBox key={n} $w={w} $active={active}>
            {!first && <Slant active={active} />}
            <TabFace $pad={pad}><T w={tw} size={11.5}>{n}</T></TabFace>
          </TabBox>
        ))}
        <StripEnd>
          <svg width="9" height="9" viewBox="0 0 9 9"><path d="M1 1.500 4 4.500 1 7.500M5 1.500 8 4.500 5 7.500" fill="none" stroke="#111" strokeWidth="1.300" /></svg>
          <Gear />
        </StripEnd>
      </TabStrip>
      <ToolRow $h={35} $top={1} $line>
        {ROW1.map((group, g) => (
          <React.Fragment key={g}>
            {group.map((icon, i) => <Slot key={i}>{icon}</Slot>)}
            {g < ROW1.length - 1 && <Divider />}
          </React.Fragment>
        ))}
        <More><svg width="16" height="18" viewBox="0 0 16 18"><path d="M4 6 7 9 4 12M8 6 11 9 8 12" fill="none" stroke="#111" strokeWidth="1.400" /></svg></More>
      </ToolRow>
      <ToolRow $h={37} $top={3}>{ROW2.map((icon, i) => <Slot key={i}>{icon}</Slot>)}</ToolRow>

      <Middle>
        <LeftSide>
          <ViewGrid><TopView /><PerspectiveView /><FrontView /><RightView /></ViewGrid>
          <ViewTabs>
            <ViewTab $w={69} $pad={2}><T w={60} face="ui" size={11.5}>Perspective</T></ViewTab>
            <Notch cut="#eff1f5" body="#d0d7e8" />
            <ViewTab $w={28} $pad={1}><T w={20} face="ui" size={11.5}>Top</T></ViewTab>
            <Notch cut="#eff1f5" body="#d0d7e8" />
            <ViewTab $w={37} $pad={2}><T w={28} face="ui" size={11.5}>Front</T></ViewTab>
            <Notch cut="#d0d7e8" body="#eff1f5" />
            <ViewTab $w={37} $pad={2} $plain><T w={28} face="ui" size={11.5}>Right</T></ViewTab>
            <Notch cut="#eff1f5" body="#eff1f5" />
            <ViewTab $w={22} $pad={3} $plain><svg width="11" height="11" viewBox="0 0 11 11"><path d="M4 1H7V4H10V7H7V10H4V7H1V4H4Z" fill="#fff" stroke="#6b6e75" /></svg></ViewTab>
          </ViewTabs>
        </LeftSide>
        <Side>
          <DoubleRule />
          <SideTabs>
            <SideTab $w={55} $pad={4}><SideTabContent $gap={2}><LayersIcon /><T w={33}>Layers</T></SideTabContent></SideTab>
            <Slope w={10} body="#d0d7e8" behind="#eff1f5" />
            <SideTab $w={72} $pad={4} $active><SideTabContent $gap={3}><Wheel s={15} /><T w={51}>Properties</T></SideTabContent></SideTab>
            <Slope w={19} body="#eff1f5" behind="#d0d7e8" />
            <SideTab $w={46} $pad={0} $joined><SideTabContent $gap={2} $pull={-5}><DisplayIcon /><T w={38}>Display</T></SideTabContent></SideTab>
            <Slope w={12} body="#d0d7e8" behind="#eff1f5" />
            <SideTab $w={46} $pad={4}><SideTabContent $gap={3}><HelpIcon /><T w={23}>Help</T></SideTabContent></SideTab>
            <Slope w={17} body="#d0d7e8" behind="#eff1f5" />
            <GearBox><Gear s={16} /></GearBox>
          </SideTabs>
          <Panel>
            <PanelBody>
              <IconButtons>
                <IconButton $on><Wheel s={20} inner="#cfe9f3" /></IconButton>
                <IconButton><svg width="24" height="24" viewBox="1 2 24 24"><Tube /></svg></IconButton>
                <IconButton><svg width="24" height="24" viewBox="1 2 24 24"><Roll /></svg></IconButton>
                <IconButton><svg width="24" height="24" viewBox="0 0 24 24"><path d="M2 7 10 5M15 23 17 14" stroke="#aaa" strokeDasharray="2 1" /><Cone p="M10 5 22 2 19 13Z" tip="M22 2Q22 9 19 13" /></svg></IconButton>
              </IconButtons>
              <Heading><P w={31}>Object</P></Heading>
              <Row><P w={24}>Type</P><Value $pad={1}><P w={28}>Varies</P></Value></Row>
              <Row><P w={27}>Name</P><Value $pad={1}><P w={34}>(varies)</P></Value></Row>
              <Row><P w={26}>Layer</P><Value><Swatch $c="#000" /><P w={33}>Default</P></Value><Drop><Chev /></Drop></Row>
              <Row><P w={61}>Display Color</P><Value><Swatch $c="#eff1f5" /><P w={34}>(varies)</P></Value><Drop><Chev /></Drop></Row>
              <Row><P w={39}>Linetype</P><Value><P w={41}>By Layer</P></Value><Drop><Chev /></Drop></Row>
              <Row><P w={48}>Print Color</P><Value><svg width="14" height="13" viewBox="0 0 14 13"><path d="M7 1 12 6.500 7 12 2 6.500Z" fill="#fff" stroke="#222" /></svg><P w={41}>By Layer</P></Value><Drop><Chev /></Drop></Row>
              <Row><P w={51}>Print Width</P><Value><P w={41}>By Layer</P></Value><Drop><Chev /></Drop></Row>
              <Row><P w={43}>Hyperlink</P><Value /><Dots><P w={9}>...</P></Dots></Row>
              <Heading><P w={105}>Render Mesh Settings</P></Heading>
              <Row><P w={64} color={grey}>Custom Mesh</P><Value $pad={1}><Box $c="#c4c8cf" /></Value></Row>
              <Row><P w={38} color={grey}>Settings</P><Value /><Adjust><P w={38} color="#6d6f74">Adjust...</P></Adjust></Row>
              <Heading><P w={49}>Rendering</P></Heading>
              <Row><P w={71}>Casts shadows</P><Value $pad={1}><Box><Tick /></Box></Value></Row>
              <Row><P w={90}>Receives shadows</P><Value $pad={1}><Box><Tick /></Box></Value></Row>
              <Heading><P w={79}>Isocurve Density</P></Heading>
              <Row><P w={35} color={grey}>Density</P><Value /><SmallSpin><SpinHalf><Tri up c="#555" /></SpinHalf><SpinHalf><Tri c="#555" /></SpinHalf></SmallSpin></Row>
              <Row><P w={108} color={grey}>Show surface isocurve</P><Value $pad={1}><Box $c="#c4c8cf" /><P w={30} color={grey}>Visible</P></Value></Row>
              <Match><P w={30} u={0}>Match</P></Match>
            </PanelBody>
            <ScrollBar><Chev up /><Thumb /><Chev /></ScrollBar>
          </Panel>
        </Side>
      </Middle>

      <Snaps>
        {SNAPS.map(([n, w, tw, on, big]) => (
          <Snap key={n} $w={w}><Box $s={big ? 15 : 13} $c={big ? "#a2a9b5" : undefined}>{on ? <Tick /> : null}</Box><P w={tw}>{n}</P></Snap>
        ))}
      </Snaps>
      <Status>
        <Cell $w={36} $start $pad={0}><T w={32}>:Plane</T></Cell>
        <Cell $w={71} $start><Clip><T w={69}>x 1879761.06</T></Clip></Cell>
        <Cell $w={71} $start><Clip><T w={73}>y -217780.281</T></Clip></Cell>
        <Cell $w={71}><T w={33}>z 0.00</T></Cell>
        <Cell $w={71}><T w={25}>Feet</T></Cell>
        <Cell $w={139} $start $pad={2}><Swatch $c="#000" /><T w={40}>Default</T></Cell>
        <Cell $w={62}><T w={55}>Grid Snap</T></Cell>
        <Cell $w={39}><T w={30}>Ortho</T></Cell>
        <Cell $w={44}><T w={37}>Planar</T></Cell>
        <Cell $w={44}><T w={37} bold>Osnap</T></Cell>
        <Cell $w={69} $start $pad={4}><Clip><T w={65} bold>SmartTrack</T></Clip></Cell>
        <Cell $w={54}><T w={47}>Gumball</T></Cell>
        <Cell $w={88}><T w={81}>Record History</T></Cell>
        <Cell $w={37}><T w={27}>Filter</T></Cell>
        <Cell $w={7} $start $pad={3}><T w={3}>I</T></Cell>
      </Status>
    </Window>
  );
}
